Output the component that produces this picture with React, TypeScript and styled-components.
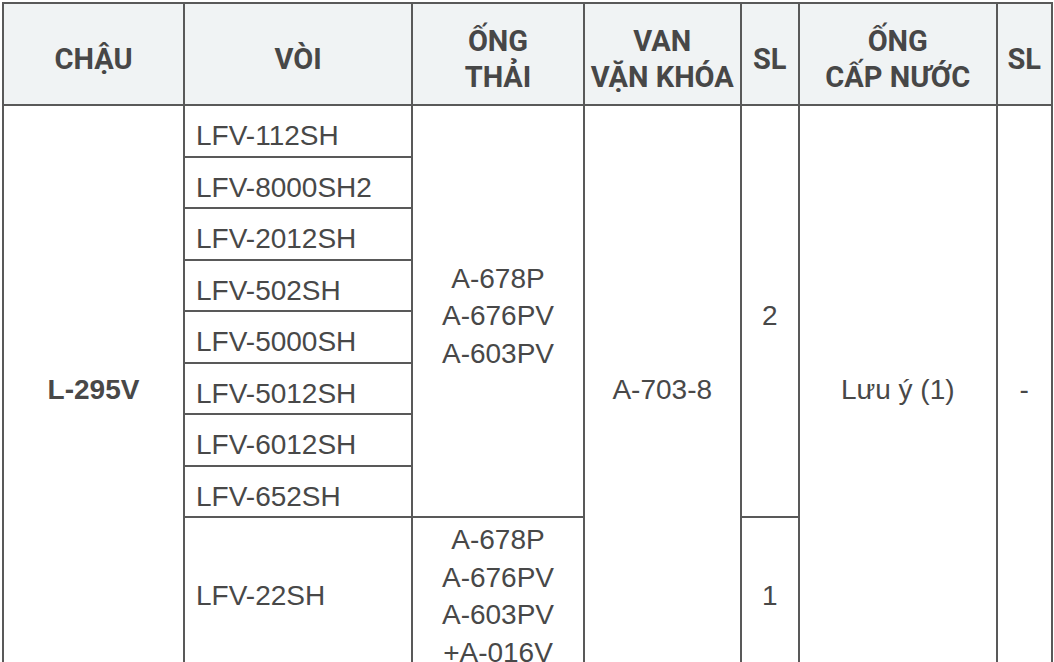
import React from "react";
import styled, { createGlobalStyle } from "styled-components";

const Global = createGlobalStyle`
  html, body { margin: 0; padding: 0; background: #ffffff; }
  body { font-family: "Liberation Sans", Arial, sans-serif; color: #4a4a4a; }
`;

const Page = styled.div`
  padding: 2px 0 0 2px;
`;

const Table = styled.table`
  border-collapse: collapse;
  table-layout: fixed;
  width: 1051px;
  border: 2px solid #595959;
`;

const HeadRow = styled.tr`
  height: 102px;
  background: #f0f3f4;
`;

const HeadCell = styled.th`
  border: 2px solid #595959;
  padding: 9px 3px 0;
  font-family: Roboto, "Liberation Sans", sans-serif;
  font-weight: 700;
  font-size: 29px;
  line-height: 36px;
  color: #474747;
  text-align: center;
  vertical-align: middle;
  white-space: nowrap;
`;

const Row = styled.tr<{ $h: number }>`
  height: ${(p) => p.$h}px;
`;

const Cell = styled.td<{ $align?: "left" | "center"; $bold?: boolean; $low?: boolean }>`
  border: 2px solid #595959;
  padding: ${(p) => (p.$low ? "10px 11px 0" : "3px 11px")};
  font-size: 28px;
  line-height: 37.5px;
  font-weight: ${(p) => (p.$bold ? 700 : 400)};
  text-align: ${(p) => p.$align ?? "center"};
  vertical-align: middle;
  color: #484848;
  white-space: nowrap;
`;

const Line = styled.div``;

const faucets = [
  "LFV-112SH",
  "LFV-8000SH2",
  "LFV-2012SH",
  "LFV-502SH",
  "LFV-5000SH",
  "LFV-5012SH",
  "LFV-6012SH",
  "LFV-652SH",
];

const widths = [181, 228, 172, 156.5, 58.5, 197.5, 55.5];

export default function App() {
  return (
    <>
      <Global />
      <Page>
        <Table>
          <colgroup>
            {widths.map((w, i) => (
              <col key={i} style={{ width: w }} />
            ))}
          </colgroup>
          <thead>
            <HeadRow>
              <HeadCell>CHẬU</HeadCell>
              <HeadCell>VÒI</HeadCell>
              <HeadCell>
                ỐNG
                <br />
                THẢI
              </HeadCell>
              <HeadCell>
                VAN
                <br />
                VẶN KHÓA
              </HeadCell>
              <HeadCell>SL</HeadCell>
              <HeadCell>
                ỐNG
                <br />
                CẤP NƯỚC
              </HeadCell>
              <HeadCell>SL</HeadCell>
            </HeadRow>
          </thead>
          <tbody>
            {faucets.map((f, i) => (
              <Row key={f} $h={51.5}>
                {i === 0 && (
                  <Cell rowSpan={9} $bold>
                    L-295V
                  </Cell>
                )}
                <Cell $align="left" $low>
                  {f}
                </Cell>
                {i === 0 && (
                  <>
                    <Cell rowSpan={8} $low>
                      <Line>A-678P</Line>
                      <Line>A-676PV</Line>
                      <Line>A-603PV</Line>
                    </Cell>
                    <Cell rowSpan={9}>A-703-8</Cell>
                    <Cell rowSpan={8} $low>
                      2
                    </Cell>
                    <Cell rowSpan={9}>Lưu ý (1)</Cell>
                    <Cell rowSpan={9}>-</Cell>
                  </>
                )}
              </Row>
            ))}
            <Row $h={158}>
              <Cell $align="left">LFV-22SH</Cell>
              <Cell>
                <Line>A-678P</Line>
                <Line>A-676PV</Line>
                <Line>A-603PV</Line>
                <Line>+A-016V</Line>
              </Cell>
              <Cell>1</Cell>
            </Row>
          </tbody>
        </Table>
      </Page>
    </>
  );
}
